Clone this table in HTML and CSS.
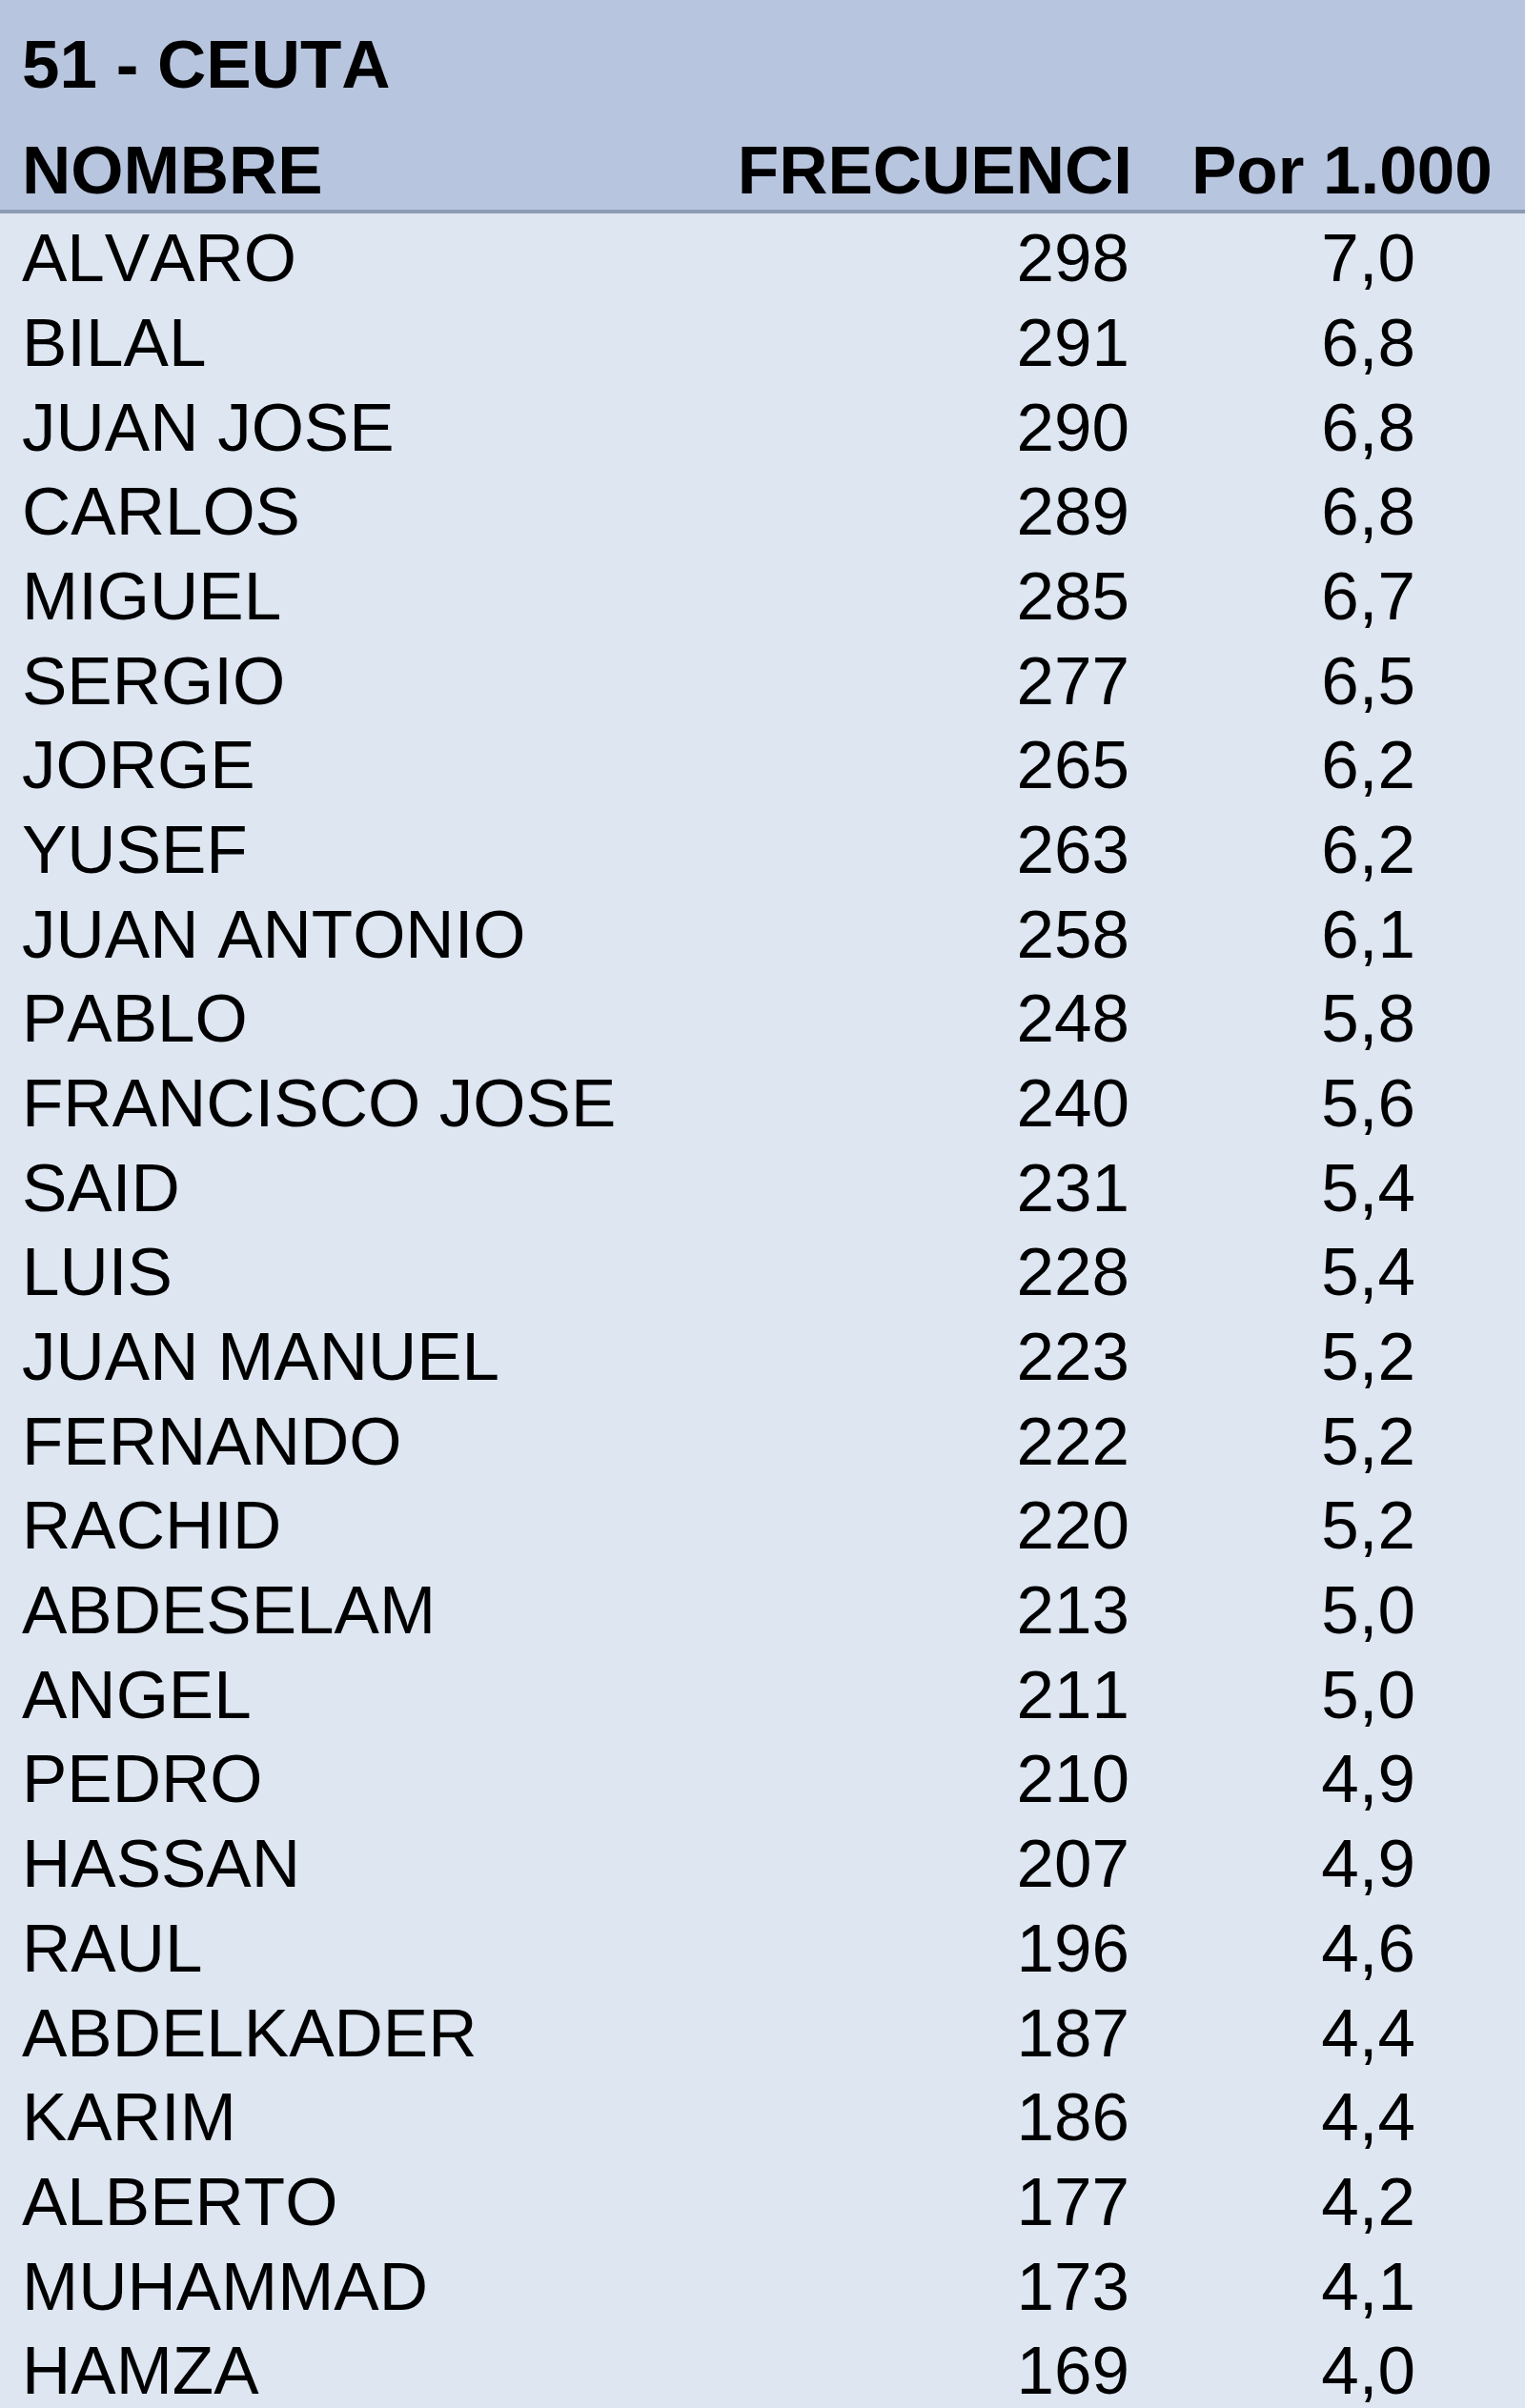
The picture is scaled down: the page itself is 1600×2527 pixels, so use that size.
FILE: index.html
```html
<!DOCTYPE html>
<html lang="es">
<head>
<meta charset="utf-8">
<title>51 - CEUTA</title>
<link rel="stylesheet" href="styles.css">
</head>
<body>
<div class="sheet">
  <div class="head">
    <div class="title-row"><span class="title">51 - CEUTA</span></div>
    <div class="row hdr">
      <div class="c-name">NOMBRE</div>
      <div class="c-freq">FRECUENCI</div>
      <div class="c-rate hdr-rate">Por 1.000</div>
    </div>
  </div>
  <div class="body">
    <div class="row"><div class="c-name">ALVARO</div><div class="c-freq">298</div><div class="c-rate">7,0</div></div>
    <div class="row"><div class="c-name">BILAL</div><div class="c-freq">291</div><div class="c-rate">6,8</div></div>
    <div class="row"><div class="c-name">JUAN JOSE</div><div class="c-freq">290</div><div class="c-rate">6,8</div></div>
    <div class="row"><div class="c-name">CARLOS</div><div class="c-freq">289</div><div class="c-rate">6,8</div></div>
    <div class="row"><div class="c-name">MIGUEL</div><div class="c-freq">285</div><div class="c-rate">6,7</div></div>
    <div class="row"><div class="c-name">SERGIO</div><div class="c-freq">277</div><div class="c-rate">6,5</div></div>
    <div class="row"><div class="c-name">JORGE</div><div class="c-freq">265</div><div class="c-rate">6,2</div></div>
    <div class="row"><div class="c-name">YUSEF</div><div class="c-freq">263</div><div class="c-rate">6,2</div></div>
    <div class="row"><div class="c-name">JUAN ANTONIO</div><div class="c-freq">258</div><div class="c-rate">6,1</div></div>
    <div class="row"><div class="c-name">PABLO</div><div class="c-freq">248</div><div class="c-rate">5,8</div></div>
    <div class="row"><div class="c-name">FRANCISCO JOSE</div><div class="c-freq">240</div><div class="c-rate">5,6</div></div>
    <div class="row"><div class="c-name">SAID</div><div class="c-freq">231</div><div class="c-rate">5,4</div></div>
    <div class="row"><div class="c-name">LUIS</div><div class="c-freq">228</div><div class="c-rate">5,4</div></div>
    <div class="row"><div class="c-name">JUAN MANUEL</div><div class="c-freq">223</div><div class="c-rate">5,2</div></div>
    <div class="row"><div class="c-name">FERNANDO</div><div class="c-freq">222</div><div class="c-rate">5,2</div></div>
    <div class="row"><div class="c-name">RACHID</div><div class="c-freq">220</div><div class="c-rate">5,2</div></div>
    <div class="row"><div class="c-name">ABDESELAM</div><div class="c-freq">213</div><div class="c-rate">5,0</div></div>
    <div class="row"><div class="c-name">ANGEL</div><div class="c-freq">211</div><div class="c-rate">5,0</div></div>
    <div class="row"><div class="c-name">PEDRO</div><div class="c-freq">210</div><div class="c-rate">4,9</div></div>
    <div class="row"><div class="c-name">HASSAN</div><div class="c-freq">207</div><div class="c-rate">4,9</div></div>
    <div class="row"><div class="c-name">RAUL</div><div class="c-freq">196</div><div class="c-rate">4,6</div></div>
    <div class="row"><div class="c-name">ABDELKADER</div><div class="c-freq">187</div><div class="c-rate">4,4</div></div>
    <div class="row"><div class="c-name">KARIM</div><div class="c-freq">186</div><div class="c-rate">4,4</div></div>
    <div class="row"><div class="c-name">ALBERTO</div><div class="c-freq">177</div><div class="c-rate">4,2</div></div>
    <div class="row"><div class="c-name">MUHAMMAD</div><div class="c-freq">173</div><div class="c-rate">4,1</div></div>
    <div class="row"><div class="c-name">HAMZA</div><div class="c-freq">169</div><div class="c-rate">4,0</div></div>
  </div>
</div>
</body>
</html>
```
FILE: styles.css
```css
html, body {
  margin: 0;
  padding: 0;
  background: #dde6f1;
}

body {
  font-family: "Liberation Sans", Arial, sans-serif;
  font-size: 71px;
  font-kerning: none;
  color: #000;
}

.sheet {
  width: 1600px;
  overflow: hidden;
}

.head {
  background: #b8c5df;
  border-bottom: 4px solid #8d9cb5;
  font-weight: bold;
}

.title-row {
  box-sizing: border-box;
  height: 111px;
  padding: 26.7px 0 0 23px;
  line-height: normal;
  white-space: nowrap;
}

.row {
  display: grid;
  grid-template-columns: 740px 450px 410px;
  box-sizing: border-box;
  height: 88.68px;
  padding-top: 6.4px;
  line-height: 82.28px;
  white-space: nowrap;
}

.row.hdr {
  height: 109px;
  padding-top: 26.7px;
  line-height: normal;
}

.c-name {
  padding-left: 23px;
}

.c-freq {
  text-align: right;
  padding-right: 5px;
}

.c-rate {
  text-align: right;
  padding-right: 115px;
}

.hdr .c-freq {
  padding-right: 2px;
}

.hdr-rate {
  text-align: left;
  padding: 0 0 0 60px;
}
```
